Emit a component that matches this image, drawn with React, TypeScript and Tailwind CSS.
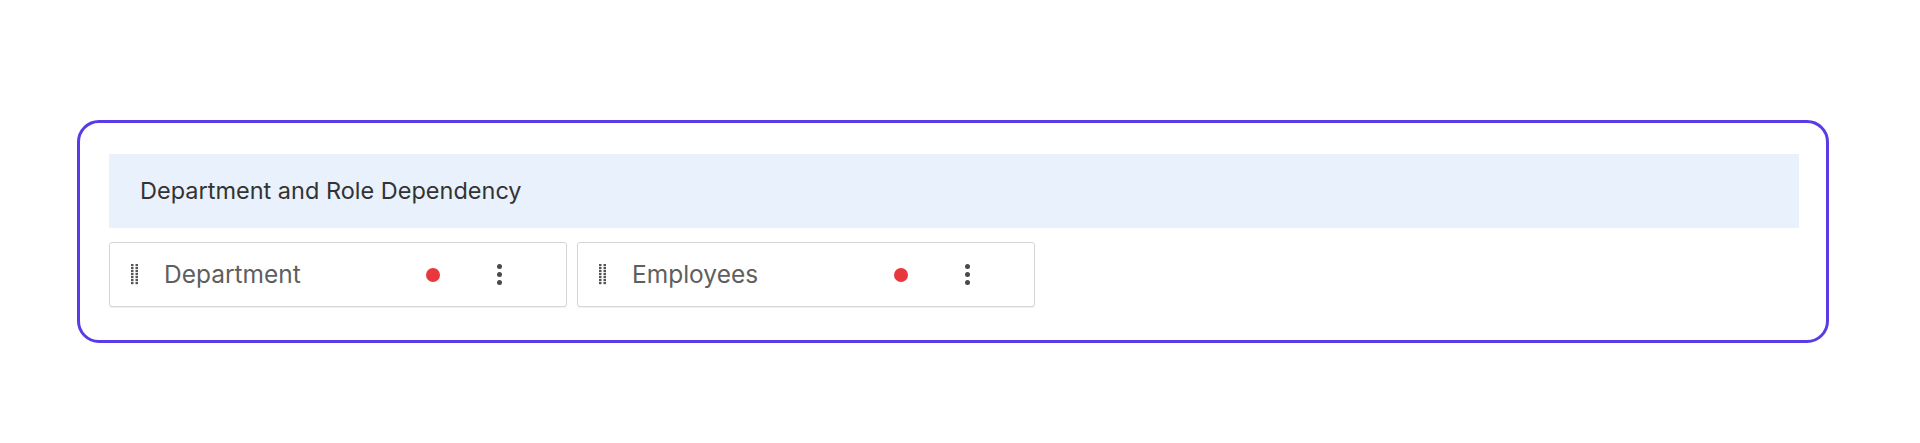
import React from 'react';

const fields = ['Department', 'Employees'];

function DragHandle() {
  const rows = [0, 1, 2, 3, 4, 5, 6];
  return (
    <svg className="h-[21px] w-[9px] shrink-0" viewBox="0 0 9 21">
      {rows.map((row) => (
        <g key={row} fill="#555555">
          <rect x="1" y={row * 3} width="2.5" height="2.2" />
          <rect x="5.5" y={row * 3} width="2.5" height="2.2" />
        </g>
      ))}
    </svg>
  );
}

function Kebab() {
  return (
    <div className="flex w-[5px] flex-col items-center gap-[3px]">
      <span className="h-[5px] w-[5px] rounded-full bg-[#4a4a4a]" />
      <span className="h-[5px] w-[5px] rounded-full bg-[#4a4a4a]" />
      <span className="h-[5px] w-[5px] rounded-full bg-[#4a4a4a]" />
    </div>
  );
}

function FieldCard({ label }: { label: string }) {
  return (
    <div className="flex h-[65px] w-[458px] items-center rounded-[3px] border border-[#d6d6d6] bg-white pl-[20px] shadow-[0_1px_1px_rgba(0,0,0,0.06)]">
      <DragHandle />
      <span className="ml-[25px] w-[262px] text-[24.5px] text-[#5f5f5f]">
        {label}
      </span>
      <span className="h-[14px] w-[14px] rounded-full bg-[#e8383d]" />
      <div className="ml-[57px]">
        <Kebab />
      </div>
    </div>
  );
}

export default function App() {
  return (
    <div
      className="min-h-[443px] bg-white pt-[120px]"
      style={{ fontFamily: 'Inter, "Noto Sans", sans-serif' }}
    >
      <section className="ml-[77px] w-[1752px] rounded-[22px] border-[3px] border-[#5b3be8] pb-[33px] pl-[29px] pr-[27px] pt-[31px]">
        <div className="flex h-[74px] items-center bg-[#e9f1fc] pl-[31px]">
          <h2 className="text-[23.5px] text-[#333333]">
            Department and Role Dependency
          </h2>
        </div>
        <div className="mt-[14px] flex gap-[10px]">
          {fields.map((field) => (
            <FieldCard key={field} label={field} />
          ))}
        </div>
      </section>
    </div>
  );
}
